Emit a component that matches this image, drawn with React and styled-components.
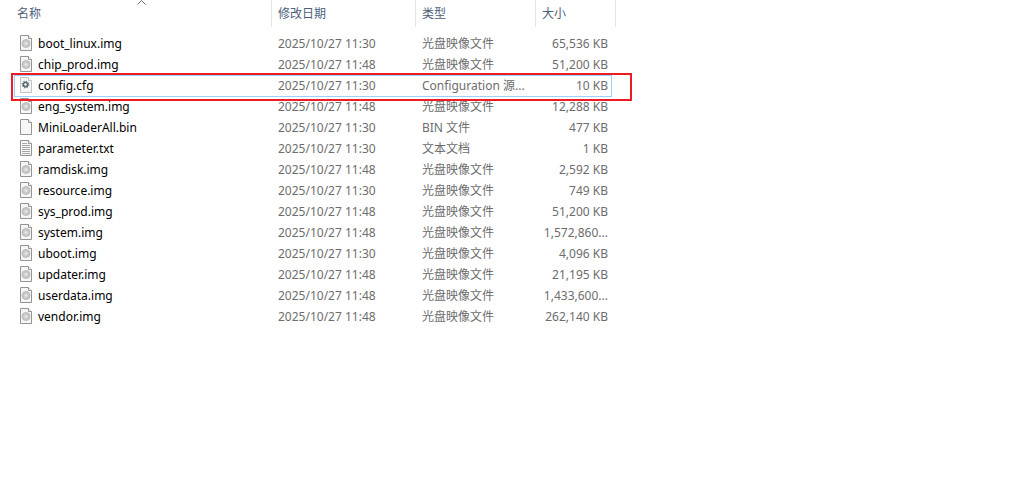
import React from "react";
import styled, { createGlobalStyle } from "styled-components";

const GlobalStyle = createGlobalStyle`
  body {
    margin: 0;
    background: #fff;
    font-family: "Noto Sans", "Noto Sans CJK SC", sans-serif;
    font-size: 12px;
    line-height: 20px;
    color: #6d6d6d;
  }
`;

const Table = styled.table`
  width: 100%;
  table-layout: fixed;
  border-collapse: separate;
  border-spacing: 0;
`;

const Col = styled.col`
  width: ${({ $width }) => ($width ? `${$width}px` : "auto")};
`;

const HeadCell = styled.th`
  position: relative;
  height: 27px;
  padding: 0;
  border-right: 1px solid #e5e5e5;
  font-weight: normal;
  text-align: left;
`;

const SortButton = styled.button`
  display: block;
  width: 100%;
  height: 27px;
  padding: 0 0 0 ${({ $first }) => ($first ? "17px" : "6px")};
  border: 0;
  background: none;
  color: #4c607a;
  font: inherit;
  text-align: left;
  cursor: pointer;
`;

const SortArrow = styled.svg`
  position: absolute;
  top: 0;
  left: 137px;
`;

const Body = styled.tbody`
  &::before {
    content: "";
    display: block;
    height: 6px;
  }
`;

const Row = styled.tr`
  position: relative;
`;

const Cell = styled.td`
  height: 21px;
  padding: 0 8px 0 6px;
  line-height: 21px;
  white-space: nowrap;
  overflow: hidden;
  text-overflow: ellipsis;
  text-align: ${({ $right }) => ($right ? "right" : "left")};
`;

const NameCell = styled(Cell)`
  padding-left: 20px;
  color: #000;
`;

const FileName = styled.div`
  display: flex;
  align-items: center;
  gap: 6px;
`;

const Icon = styled.svg`
  flex: none;
  width: 12px;
  height: 16px;
  margin-bottom: 1px;
`;

const Selection = styled.div`
  position: absolute;
  top: 0;
  left: 14px;
  width: 598px;
  height: 22px;
  box-sizing: border-box;
  border: 1px solid #99d1ff;
  pointer-events: none;
`;

const Marker = styled.div`
  position: absolute;
  z-index: 1;
  top: -2px;
  left: 11px;
  width: 621px;
  height: 28px;
  box-sizing: border-box;
  border: 2px solid #ed1c24;
  pointer-events: none;
`;

const files = [
  { name: "boot_linux.img", time: "11:30", type: "光盘映像文件", size: "65,536 KB", icon: "disc" },
  { name: "chip_prod.img", time: "11:48", type: "光盘映像文件", size: "51,200 KB", icon: "disc" },
  { name: "config.cfg", time: "11:30", type: "Configuration 源...", size: "10 KB", icon: "gear", selected: true },
  { name: "eng_system.img", time: "11:48", type: "光盘映像文件", size: "12,288 KB", icon: "disc" },
  { name: "MiniLoaderAll.bin", time: "11:30", type: "BIN 文件", size: "477 KB", icon: "blank" },
  { name: "parameter.txt", time: "11:30", type: "文本文档", size: "1 KB", icon: "text" },
  { name: "ramdisk.img", time: "11:48", type: "光盘映像文件", size: "2,592 KB", icon: "disc" },
  { name: "resource.img", time: "11:30", type: "光盘映像文件", size: "749 KB", icon: "disc" },
  { name: "sys_prod.img", time: "11:48", type: "光盘映像文件", size: "51,200 KB", icon: "disc" },
  { name: "system.img", time: "11:48", type: "光盘映像文件", size: "1,572,860...", icon: "disc" },
  { name: "uboot.img", time: "11:30", type: "光盘映像文件", size: "4,096 KB", icon: "disc" },
  { name: "updater.img", time: "11:48", type: "光盘映像文件", size: "21,195 KB", icon: "disc" },
  { name: "userdata.img", time: "11:48", type: "光盘映像文件", size: "1,433,600...", icon: "disc" },
  { name: "vendor.img", time: "11:48", type: "光盘映像文件", size: "262,140 KB", icon: "disc" },
];

const columns = [
  { label: "名称", width: 272 },
  { label: "修改日期", width: 144 },
  { label: "类型", width: 120 },
  { label: "大小", width: 80 },
];

const FileIcon = ({ kind }) => {
  const edge = kind === "gear" ? "#c4c4c4" : "#949494";
  return (
    <Icon viewBox="0 0 12 16" aria-hidden="true">
      <path d="M.5 .5H8.5L11.5 3.5V15.5H.5Z" fill="#f6f6f6" stroke={edge} />
      <path d="M8.5 .5V3.5H11.5" fill="#fff" stroke={edge} />
      {kind === "disc" && (
        <>
          <circle cx="6" cy="8.5" r="4" fill="#c6c8ca" stroke="#b2b4b6" strokeWidth=".8" />
          <circle cx="6" cy="8.5" r="2" fill="#d6d8d9" />
          <circle cx="6" cy="8.5" r="1" fill="#e6e7e8" />
        </>
      )}
      {kind === "gear" && (
        <>
          <circle cx="5.5" cy="7.5" r="3.1" fill="none" stroke="#60727c" strokeWidth="1.4" strokeDasharray="1.22 1.22" />
          <circle cx="5.5" cy="7.5" r="2.1" fill="#fff" stroke="#566872" strokeWidth="1.5" />
        </>
      )}
      {kind === "text" && (
        <path d="M2 3.5H7M2 5.5H10M2 7.5H10M2 9.5H10M2 11.5H10M2 13.5H10" stroke="#a8a8a8" />
      )}
    </Icon>
  );
};

const FileRow = ({ file }) => (
  <Row>
    <NameCell>
      <FileName>
        <FileIcon kind={file.icon} />
        {file.name}
      </FileName>
      {file.selected && (
        <>
          <Selection />
          <Marker />
        </>
      )}
    </NameCell>
    <Cell>2025/10/27 {file.time}</Cell>
    <Cell>{file.type}</Cell>
    <Cell $right>{file.size}</Cell>
  </Row>
);

export default function App() {
  return (
    <>
      <GlobalStyle />
      <Table>
        <colgroup>
          {columns.map((column) => (
            <Col key={column.label} $width={column.width} />
          ))}
          <Col />
        </colgroup>
        <thead>
          <tr>
            {columns.map((column, i) => (
              <HeadCell key={column.label} aria-sort={i === 0 ? "ascending" : undefined}>
                <SortButton type="button" $first={i === 0}>
                  {column.label}
                </SortButton>
                {i === 0 && (
                  <SortArrow width="9" height="5" viewBox="0 0 9 5" aria-hidden="true">
                    <path d="M.5 4.5L4.5 .5L8.5 4.5" fill="none" stroke="#6d6d6d" />
                  </SortArrow>
                )}
              </HeadCell>
            ))}
          </tr>
        </thead>
        <Body>
          {files.map((file) => (
            <FileRow file={file} key={file.name} />
          ))}
        </Body>
      </Table>
    </>
  );
}
